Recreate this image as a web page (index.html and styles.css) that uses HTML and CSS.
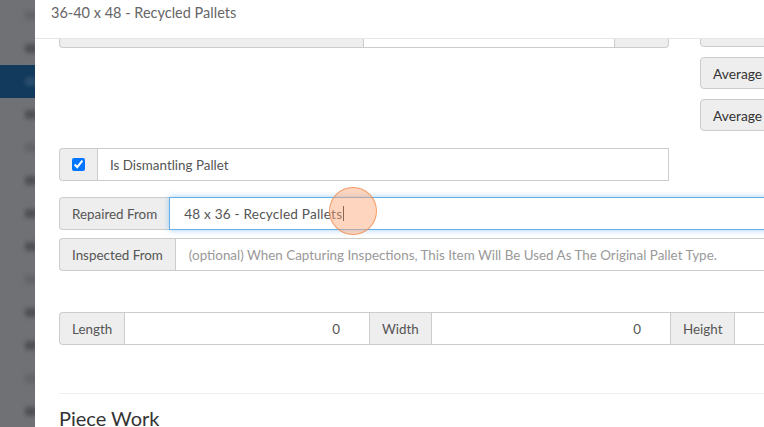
FILE: index.html
```html
<!DOCTYPE html>
<html>
<head>
    <link rel="stylesheet" href="styles.css">
</head>
<body>
    <div class="sidebar">
        <ul class="nav">
            <li><span class="nav-icon faint"></span></li>
            <li><span class="nav-icon"></span></li>
            <li class="active"><span class="nav-icon"></span></li>
            <li><span class="nav-icon"></span></li>
            <li><span class="nav-icon faint"></span></li>
            <li><span class="nav-icon"></span></li>
            <li><span class="nav-icon"></span></li>
            <li><span class="nav-icon"></span></li>
            <li><span class="nav-icon faint"></span></li>
            <li><span class="nav-icon"></span></li>
            <li><span class="nav-icon"></span></li>
            <li><span class="nav-icon faint"></span></li>
            <li><span class="nav-icon"></span></li>
        </ul>
    </div>
    <div class="modal">
        <div class="modal-header">
            <h4 class="modal-title">36-40 x 48 - Recycled Pallets</h4>
        </div>
        <div class="modal-body">
            <div class="top-row">
                <div class="left-col">
                    <div class="input-group">
                        <span class="addon wide-addon"></span>
                        <span class="form-control mid-control"></span>
                        <span class="addon end-addon"></span>
                    </div>
                    <div class="input-group check-group">
                        <span class="addon check-addon"><input type="checkbox" checked></span>
                        <span class="form-control">Is Dismantling Pallet</span>
                    </div>
                </div>
                <div class="right-col">
                    <button class="btn"></button>
                    <button class="btn">Average</button>
                    <button class="btn">Average</button>
                </div>
            </div>

            <div class="input-group repaired-group">
                <span class="addon">Repaired From</span>
                <span class="form-control focused">48 x 36 - Recycled Pallets<span class="caret"></span></span>
                <span class="click-mark"></span>
            </div>
            <div class="input-group inspected-group">
                <span class="addon">Inspected From</span>
                <span class="form-control placeholder">(optional) When Capturing Inspections, This Item Will Be Used As The Original Pallet Type.</span>
            </div>

            <div class="dims">
                <div class="input-group">
                    <span class="addon">Length</span>
                    <span class="form-control number">0</span>
                </div>
                <div class="input-group">
                    <span class="addon">Width</span>
                    <span class="form-control number">0</span>
                </div>
                <div class="input-group">
                    <span class="addon">Height</span>
                    <span class="form-control number"></span>
                </div>
            </div>

            <hr>
            <h3 class="section-title">Piece Work</h3>
        </div>
    </div>
</body>
</html>
```

FILE: styles.css
```css
html, body {
    margin: 0;
    height: 100%;
    overflow: hidden;
}
body {
    font-family: Lato, "Open Sans", sans-serif;
    font-size: 13.4px;
    color: #555;
    display: flex;
    background: #fff;
}
.sidebar {
    width: 35px;
    flex-shrink: 0;
    background: #707175;
    overflow: hidden;
}
.nav {
    list-style: none;
    margin: -1px 0 0;
    padding: 0;
}
.nav li {
    height: 33px;
    display: flex;
    align-items: center;
    justify-content: flex-end;
}
.nav li.active {
    background: #113a5c;
}
.nav-icon {
    width: 12px;
    height: 9px;
    margin-right: -2px;
    background: #4f5053;
    border-radius: 3px;
    filter: blur(2px);
}
.nav-icon.faint {
    background: #636468;
}
.nav li.active .nav-icon {
    background: #2a4d6c;
}
.modal {
    flex: 1;
    min-width: 0;
    background: #fff;
}
.modal-header {
    position: relative;
    z-index: 1;
    height: 39px;
    background: #fff;
    border-bottom: 1px solid #e5e5e5;
    padding: 0 16px;
    box-sizing: border-box;
}
.modal-title {
    margin: 0;
    padding-top: 4px;
    font-size: 14.5px;
    font-weight: normal;
    color: #666;
}
.modal-body {
    padding: 0 0 0 24px;
    width: 760px;
}
.top-row {
    display: flex;
    margin-top: -24px;
}
.left-col {
    width: 610px;
}
.right-col {
    margin-left: 31px;
    display: flex;
    flex-direction: column;
    gap: 10px;
}
.input-group {
    display: flex;
    height: 33px;
    box-sizing: border-box;
}
.addon, .form-control {
    display: flex;
    align-items: center;
    box-sizing: border-box;
    height: 100%;
    padding: 0 12px;
    border: 1px solid #ccc;
    white-space: nowrap;
}
.addon {
    background: #eee;
    color: #555;
    border-radius: 4px 0 0 4px;
    border-right: 0;
}
.form-control {
    flex: 1;
    background: #fff;
    color: #555;
    min-width: 0;
}
.wide-addon {
    width: 304px;
    flex: none;
}
.mid-control {
    flex: none;
    width: 252px;
}
.end-addon {
    flex: 1;
    border-radius: 0 4px 4px 0;
    border-right: 1px solid #ccc;
    border-left: 0;
}
.check-group {
    margin-top: 100px;
}
.check-addon {
    width: 38px;
    padding: 0;
    justify-content: center;
}
.check-addon input {
    margin: 0;
    width: 13px;
    height: 13px;
}
.check-group .form-control {
    padding-left: 12px;
}
.btn {
    height: 32px;
    width: 90px;
    padding: 0 12px;
    font: inherit;
    font-size: 13.8px;
    color: #333;
    text-align: left;
    background: #eee;
    border: 1px solid #ccc;
    border-radius: 4px;
}
.repaired-group {
    position: relative;
    margin-top: 16px;
}
.form-control.focused {
    border-color: #66afe9;
    box-shadow: 0 0 6px rgba(102, 175, 233, 0.6);
    padding-left: 14px;
    font-size: 13.6px;
    letter-spacing: 0.2px;
}
.caret {
    display: inline-block;
    width: 1px;
    height: 15px;
    margin-left: 1px;
    background: #333;
}
.click-mark {
    position: absolute;
    left: 270px;
    top: -10px;
    width: 46px;
    height: 46px;
    border-radius: 50%;
    background: rgba(252, 165, 115, 0.45);
    border: 1px solid rgba(240, 140, 80, 0.8);
}
.inspected-group {
    margin-top: 8px;
}
.placeholder {
    color: #999;
    padding-left: 13px;
}
.dims {
    display: grid;
    grid-template-columns: 310px 301px 1fr;
    margin-top: 41px;
}
.dims .addon {
    border-radius: 0;
}
.dims .input-group:first-child .addon {
    border-radius: 4px 0 0 4px;
}
.dims .form-control {
    justify-content: flex-end;
    padding-right: 29px;
    border-right: 0;
}
hr {
    margin: 48px 0 0;
    border: 0;
    border-top: 1px solid #eee;
}
.section-title {
    margin: 12px 0 0;
    font-size: 20px;
    font-weight: normal;
    color: #333;
}
```
